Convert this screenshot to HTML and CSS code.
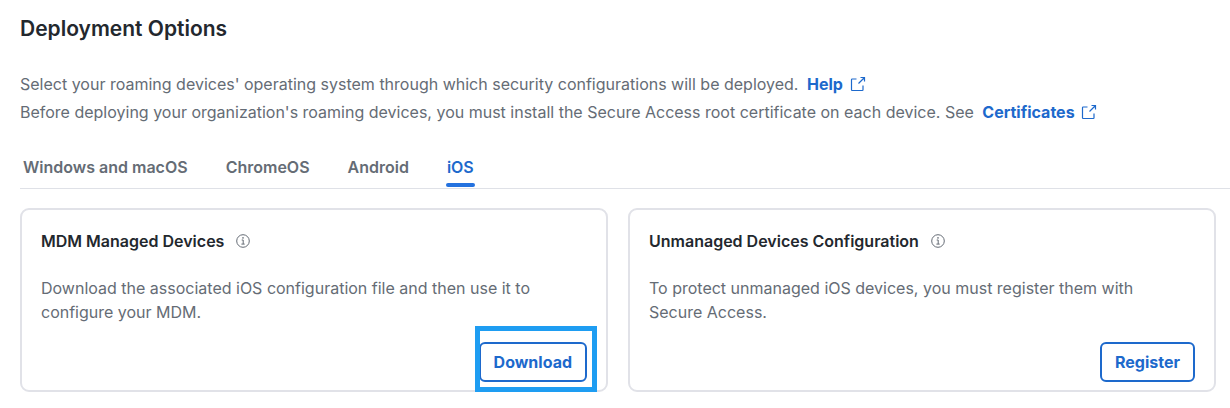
FILE: index.html
```html
<!DOCTYPE html>
<html lang="en">
<head>
<meta charset="utf-8">
<title>Deployment Options</title>
<link rel="stylesheet" href="styles.css">
</head>
<body>
<svg class="defs" aria-hidden="true">
  <symbol id="external" viewBox="0 0 16 16"><path d="M6.500 3H2.200Q1.500 3 1.500 3.700V13.800Q1.500 14.500 2.200 14.500H12.300Q13 14.500 13 13.800V9.500M10.500 1.500H14.500V5.500M14.500 1.500L8.500 7.500" fill="none" stroke="currentColor" stroke-width="1.200"/></symbol>
  <symbol id="info" viewBox="0 0 14 14"><circle cx="7" cy="7" r="6.300" fill="none" stroke="currentColor"/><path d="M5.700 6H7.200V10M5.400 10.100H8.700" fill="none" stroke="currentColor"/><circle cx="7" cy="3.900" r=".8" fill="currentColor"/></symbol>
</svg>
<main class="page">
  <h1 class="title">Deployment Options</h1>
  <div class="intro">
    <p>Select your roaming devices' operating system through which security configurations will be deployed. <a class="link" href="#help">Help <svg class="external"><use href="#external"/></svg></a></p>
    <p>Before deploying your organization's roaming devices, you must install the Secure Access root certificate on each device. See <a class="link" href="#certificates">Certificates <svg class="external"><use href="#external"/></svg></a></p>
  </div>
  <nav class="tabs" aria-label="Operating system">
    <button class="tab">Windows and macOS</button>
    <button class="tab">ChromeOS</button>
    <button class="tab">Android</button>
    <button class="tab active" aria-current="page">iOS</button>
  </nav>
  <div class="cards">
    <section class="card">
      <h2 class="card-title">MDM Managed Devices <svg class="info"><use href="#info"/></svg></h2>
      <p class="card-text">Download the associated iOS configuration file and then use it to configure your MDM.</p>
      <div class="actions"><span class="highlight"><button class="button">Download</button></span></div>
    </section>
    <section class="card">
      <h2 class="card-title">Unmanaged Devices Configuration <svg class="info"><use href="#info"/></svg></h2>
      <p class="card-text">To protect unmanaged iOS devices, you must register them with Secure Access.</p>
      <div class="actions"><button class="button">Register</button></div>
    </section>
  </div>
</main>
</body>
</html>
```
FILE: styles.css
```css
* { box-sizing: border-box; }
body { margin: 0; background: #fff; color: #656c75; font: 16px/24px Inter, sans-serif; }
.defs { display: none; }
.page { padding: 16px 0 16px 20px; }
h1, h2, p { margin: 0; }
.title { color: #23282e; font-size: 21px; line-height: 26px; font-weight: 600; }
.intro { margin-top: 28px; line-height: 28px; }
.link { color: #1d69cc; font-weight: 700; text-decoration: none; margin-left: 4px; }
.external { width: 16px; height: 16px; margin-left: 3px; vertical-align: -2px; }
.tabs { display: flex; gap: 38px; margin-top: 27px; padding-left: 3px; border-bottom: 1px solid #dfe1e7; }
.tab { position: relative; height: 35px; padding: 0 0 7px; border: 0; background: none; color: #656c75; font: 600 16px/24px Inter, sans-serif; }
.active { color: #1d69cc; }
.active::after { content: ""; position: absolute; inset: auto -1px 1px -1px; height: 4px; border-radius: 2px; background: #2472df; }
.cards { display: grid; grid-template-columns: 1fr 1fr; gap: 20px; margin: 19px 14px 0 0; }
.card { padding: 19px 19px 8px; border: 2px solid #e1e2e8; border-radius: 9px; }
.card-title { display: flex; align-items: center; gap: 12px; color: #23282e; font-size: 16px; line-height: 24px; font-weight: 600; }
.info { width: 14px; height: 14px; color: #656c75; }
.card-text { margin-top: 23px; padding-right: 20px; }
.actions { display: flex; justify-content: flex-end; margin-top: 18px; }
.button { height: 40px; padding: 0 13px; border: 2px solid #1d69cc; border-radius: 6px; background: #fff; color: #1d69cc; font: 700 16px/24px Inter, sans-serif; }
.highlight { position: relative; display: flex; }
.highlight::after { content: ""; position: absolute; inset: -16px -10px -10px -4px; border: 5px solid #1e9df2; pointer-events: none; }
```
